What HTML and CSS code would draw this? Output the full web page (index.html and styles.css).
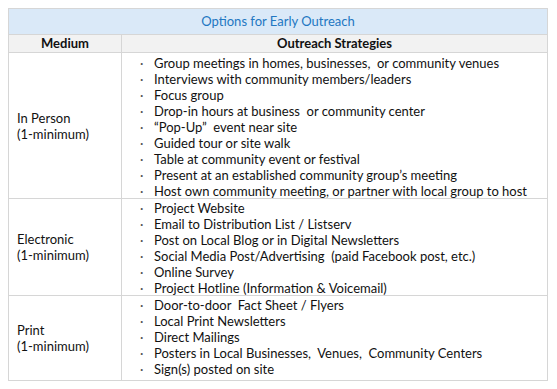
FILE: index.html
```html
<!DOCTYPE html>
<html>
<head>
<meta charset="utf-8">
<link rel="stylesheet" href="styles.css">
</head>
<body>
<div class="tbl">
  <div class="title">Options for Early Outreach</div>
  <div class="hd c1">Medium</div>
  <div class="hd c2">Outreach Strategies</div>

  <div class="med r1">In Person<br>(1-minimum)</div>
  <ul class="list r1">
    <li>Group meetings in homes, businesses,&nbsp; or community venues</li>
    <li>Interviews with community members/leaders</li>
    <li>Focus group</li>
    <li>Drop-in hours at business&nbsp; or community center</li>
    <li>“Pop-Up”&nbsp; event near site</li>
    <li>Guided tour or site walk</li>
    <li>Table at community event or festival</li>
    <li>Present at an established community group’s meeting</li>
    <li>Host own community meeting, or partner with local group to host</li>
  </ul>

  <div class="med r2">Electronic<br>(1-minimum)</div>
  <ul class="list r2">
    <li>Project Website</li>
    <li>Email to Distribution List / Listserv</li>
    <li>Post on Local Blog or in Digital Newsletters</li>
    <li>Social Media Post/Advertising&nbsp; (paid Facebook post, etc.)</li>
    <li>Online Survey</li>
    <li>Project Hotline (Information &amp; Voicemail)</li>
  </ul>

  <div class="med r3">Print<br>(1-minimum)</div>
  <ul class="list r3">
    <li>Door-to-door&nbsp; Fact Sheet / Flyers</li>
    <li>Local Print Newsletters</li>
    <li>Direct Mailings</li>
    <li>Posters in Local Businesses,&nbsp; Venues,&nbsp; Community Centers</li>
    <li>Sign(s) posted on site</li>
  </ul>
</div>
</body>
</html>
```

FILE: styles.css
```css
html, body { margin: 0; padding: 0; background: #fff; }
body {
  padding: 8px 0 0 8px;
  font-family: Lato, "Open Sans", sans-serif;
  font-size: 13px;
  color: #111;
}
.tbl {
  width: 538px;
  display: grid;
  grid-template-columns: 113px 1fr;
  border: 1px solid #d6d6d6;
}
.title {
  grid-column: 1 / 3;
  background: #dae9f8;
  color: #2277c2;
  text-align: center;
  height: 25px;
  line-height: 25px;
  border-bottom: 1px solid #d6d6d6;
}
.hd {
  background: #f2f2f2;
  font-weight: bold;
  text-align: center;
  height: 17px;
  line-height: 17px;
  border-bottom: 1px solid #d6d6d6;
}
.c1, .med { border-right: 1px solid #d6d6d6; }
.med {
  display: flex;
  align-items: center;
  padding-left: 8px;
  line-height: 16px;
}
.r1, .r2 { border-bottom: 1px solid #d6d6d6; }
.list {
  list-style: none;
  margin: 0;
  padding: 1px 0 1px 16px;
}
.list li {
  line-height: 16px;
  height: 16px;
  white-space: nowrap;
  position: relative;
  padding-left: 16px;
}
.list li::before {
  content: "·";
  position: absolute;
  left: 2px;
  top: 0;
  color: #555;
}
.r1.list { height: 146px; box-sizing: border-box; padding-top: 2px; }
.r2.list { height: 97px; box-sizing: border-box; }
.r3.list { height: 84px; box-sizing: border-box; }
```
